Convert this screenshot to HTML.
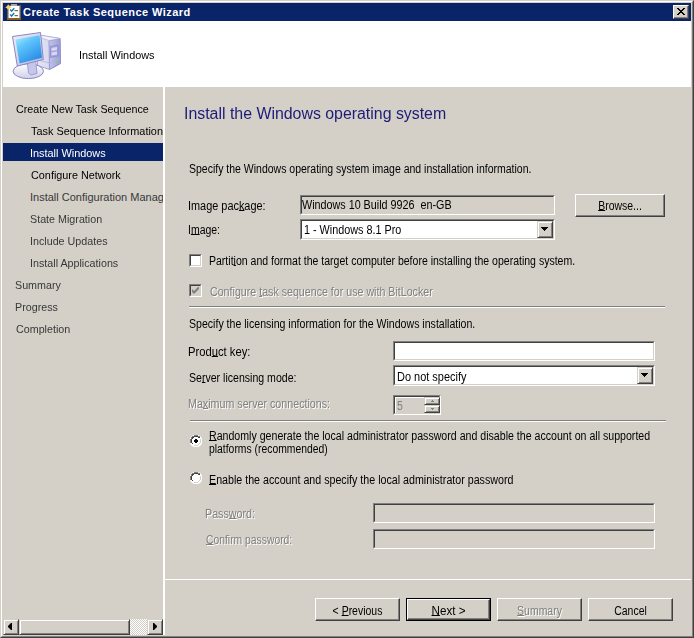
<!DOCTYPE html>
<html><head><meta charset="utf-8">
<style>
*{margin:0;padding:0;box-sizing:border-box}
html,body{width:694px;height:638px;overflow:hidden;background:#d4d0c8}
body{position:relative;font-family:"Liberation Sans",sans-serif;font-size:11px;color:#000}
.a{position:absolute}
.t{position:absolute;white-space:nowrap;line-height:13px}
.frame{left:0;top:0;width:694px;height:638px;border-top:1px solid #d4d0c8;border-left:1px solid #d4d0c8;border-right:1px solid #404040;border-bottom:1px solid #404040}
.frame2{left:1px;top:1px;width:692px;height:636px;border-top:1px solid #fff;border-left:1px solid #fff;border-right:1px solid #808080;border-bottom:1px solid #808080}
.title{left:3px;top:3px;width:688px;height:18px;background:#0a246a}
.ttext{left:23px;top:4px;color:#fff;font-weight:bold;font-size:11px;letter-spacing:0.45px;line-height:16px}
.close{left:673px;top:5px;width:16px;height:14px;background:#d4d0c8;border-top:1px solid #fff;border-left:1px solid #fff;border-right:1px solid #404040;border-bottom:1px solid #404040;box-shadow:inset -1px -1px 0 #808080}
.header{left:3px;top:21px;width:688px;height:66px;background:#fff}
.left{left:3px;top:87px;width:160px;height:548px;background:#d4d0c8}
.div{left:163px;top:87px;width:2px;height:548px;background:#fff}
.sel{left:3px;top:143px;width:160px;height:18px;background:#0a246a}
.nav{font-size:11px;transform:scaleX(0.975);transform-origin:0 0}
.dis{color:#383838}
.b{font-size:12px;line-height:14px;transform:scaleX(0.872);transform-origin:0 0}
.gray{color:#808080;text-shadow:1px 1px 0 #fff}
.sunk{position:absolute;border-top:1px solid #808080;border-left:1px solid #808080;border-right:1px solid #fff;border-bottom:1px solid #fff}
.sunk>.in{position:absolute;left:0;top:0;right:0;bottom:0;border-top:1px solid #404040;border-left:1px solid #404040;border-right:1px solid #d4d0c8;border-bottom:1px solid #d4d0c8}
.sbtn{position:absolute;width:16px;height:16px;background:#d4d0c8;border-top:1px solid #d4d0c8;border-left:1px solid #d4d0c8;border-right:1px solid #404040;border-bottom:1px solid #404040;box-shadow:inset 1px 1px 0 #fff,inset -1px -1px 0 #808080}
.btn{position:absolute;background:#d4d0c8;border-top:1px solid #fff;border-left:1px solid #fff;border-right:1px solid #404040;border-bottom:1px solid #404040;box-shadow:inset -1px -1px 0 #808080}
.bt{position:absolute;left:0;right:0;text-align:center;white-space:nowrap;font-size:12px;line-height:14px;transform:scaleX(0.872);transform-origin:50% 0}
.btnd{position:absolute;background:#d4d0c8;border:1px solid #000;}
.btnd>.in{position:absolute;left:0;top:0;right:0;bottom:0;border-top:1px solid #fff;border-left:1px solid #fff;border-right:1px solid #404040;border-bottom:1px solid #404040;box-shadow:inset -1px -1px 0 #808080}
.sep{position:absolute;height:2px;border-top:1px solid #808080;border-bottom:1px solid #fff}
.ddb{position:absolute;width:16px;height:16px;background:#d4d0c8;border-top:1px solid #d4d0c8;border-left:1px solid #d4d0c8;border-right:1px solid #404040;border-bottom:1px solid #404040;box-shadow:inset 1px 1px 0 #fff,inset -1px -1px 0 #808080}
.cb{position:absolute;width:13px;height:13px;border-top:1px solid #808080;border-left:1px solid #808080;border-right:1px solid #fff;border-bottom:1px solid #fff}
.cb>.in{position:absolute;left:0;top:0;right:0;bottom:0;border-top:1px solid #404040;border-left:1px solid #404040;border-right:1px solid #d4d0c8;border-bottom:1px solid #d4d0c8;background:#fff}
u{text-decoration:underline;text-decoration-thickness:1px;text-underline-offset:0px}
</style></head><body>
<div class="a frame"></div>
<div class="a frame2"></div>
<div class="a title"></div>
<svg class="a" style="left:3px;top:3px" width="20" height="18" viewBox="3 3 20 18">
  <rect x="7" y="5" width="14" height="15" fill="#6e5a48"/>
  <rect x="7" y="17.5" width="14" height="2.5" fill="#8a5e22"/>
  <rect x="8.5" y="6" width="11" height="12" fill="#fff"/>
  <rect x="11" y="4" width="6" height="2" fill="#a8a8a8"/>
  <path d="M10.2 9.6 L11.6 11.2 L14.2 8.2" stroke="#1f7aa6" stroke-width="1.5" fill="none"/>
  <path d="M10.2 14.4 L11.6 16 L14.2 13" stroke="#1f7aa6" stroke-width="1.5" fill="none"/>
  <rect x="14.5" y="10" width="3.5" height="1.2" fill="#6a6a6a"/>
  <rect x="14.5" y="15" width="3.5" height="1.2" fill="#6a6a6a"/>
  <path d="M8.3 4 L9.2 6.3 L11.5 7.3 L9.2 8.3 L8.3 10.5 L7.4 8.3 L5 7.3 L7.4 6.3 Z" fill="#f6b840"/>
  <circle cx="8.3" cy="7.3" r="1.8" fill="#fcd070"/>
</svg>
<div class="t ttext">Create Task Sequence Wizard</div>
<div class="a close"></div>
<svg class="a" style="left:677px;top:8px" width="8" height="7" viewBox="0 0 8 7" shape-rendering="crispEdges"><path d="M0 0h2v1h-2zM6 0h2v1h-2zM1 1h2v1h-2zM5 1h2v1h-2zM2 2h4v1h-4zM3 3h2v1h-2zM2 4h4v1h-4zM1 5h2v1h-2zM5 5h2v1h-2zM0 6h2v1h-2zM6 6h2v1h-2z" fill="#000"/></svg>

<div class="a header"></div>
<svg class="a" style="left:0;top:21px" width="70" height="66" viewBox="0 21 70 66">
  <defs>
    <linearGradient id="scr" x1="0" y1="0" x2="0.6" y2="1">
      <stop offset="0" stop-color="#b0f0ff"/><stop offset="0.4" stop-color="#5cc4fa"/><stop offset="1" stop-color="#2a8ce8"/>
    </linearGradient>
    <linearGradient id="side" x1="0" y1="0" x2="1" y2="0">
      <stop offset="0" stop-color="#e4e4f4"/><stop offset="1" stop-color="#cfcfec"/>
    </linearGradient>
    <linearGradient id="front" x1="0" y1="0" x2="1" y2="0">
      <stop offset="0" stop-color="#c4c4ec"/><stop offset="1" stop-color="#9c9cd8"/>
    </linearGradient>
    <linearGradient id="base" x1="0" y1="0" x2="0" y2="1">
      <stop offset="0" stop-color="#ffffff"/><stop offset="1" stop-color="#d0d0ea"/>
    </linearGradient>
    <linearGradient id="bez" x1="0" y1="0" x2="1" y2="1">
      <stop offset="0" stop-color="#f0f0fa"/><stop offset="1" stop-color="#b8b8e0"/>
    </linearGradient>
  </defs>
  <!-- tower -->
  <path d="M42 35.5 L60 38.5 L60.5 63.5 L49.5 69.5 L37.5 65.5 L38 37 Z" fill="url(#side)" stroke="#9a9ad0" stroke-width="0.9"/>
  <path d="M49 40.5 L60 38.5 L60.5 63.5 L49.5 69.5 Z" fill="url(#front)" stroke="#8c8cc8" stroke-width="0.8"/>
  <path d="M38 37 L42 35.5 L60 38.5 L49 40.5 Z" fill="#f4f4fc" stroke="#a8a8d8" stroke-width="0.6"/>
  <path d="M50.5 46.5 L58 45 L58 56 L50.5 57.5 Z" fill="#a4a4dc" stroke="#8080c0" stroke-width="0.6"/><path d="M51.5 48 L57 47 L57 50 L51.5 51 Z M51.5 52.5 L57 51.5 L57 54.5 L51.5 55.5 Z" fill="#d8d8f4"/>
  <path d="M38 60 L49.5 63 L60.3 59" fill="none" stroke="#b0b0dc" stroke-width="0.8"/>
  <rect x="56" y="61" width="2" height="2" fill="#7cd070"/>
  <!-- base -->
  <ellipse cx="28.3" cy="71.2" rx="15.2" ry="7.4" fill="url(#base)" stroke="#8a8ac4" stroke-width="1"/>
  <path d="M27 60 L35.5 59 L37 73.5 L31 75 L28.5 73 Z" fill="#c6c6ea" stroke="#9090c8" stroke-width="0.8"/>
  <!-- monitor -->
  <path d="M12.5 36.5 L40.5 32.5 L43.3 59.5 L17.3 66 Z" fill="url(#bez)" stroke="#8888c4" stroke-width="1"/>
  <path d="M15.5 39.5 L39.5 35.3 L42 57.8 L19.5 63.6 Z" fill="url(#scr)"/>
</svg>
<div class="t" style="left:79px;top:49px;transform:scaleX(0.988);transform-origin:0 0">Install Windows</div>

<div class="a left"></div>
<div class="a sel"></div>
<div class="a" style="left:3px;top:87px;width:160px;height:532px;overflow:hidden">
<div class="t nav" style="left:13px;top:16px">Create New Task Sequence</div>
<div class="t nav" style="left:28px;top:38px;transform:scaleX(0.99)">Task Sequence Information</div>
<div class="t nav" style="left:27px;top:60px;color:#fff;transform:scaleX(0.99)">Install Windows</div>
<div class="t nav" style="left:28px;top:82px;transform:scaleX(0.985)">Configure Network</div>
<div class="t nav dis" style="left:27px;top:104px;transform:scaleX(1.0)">Install Configuration Manager</div>
<div class="t nav dis" style="left:27px;top:126px">State Migration</div>
<div class="t nav dis" style="left:27px;top:148px">Include Updates</div>
<div class="t nav dis" style="left:27px;top:170px">Install Applications</div>
<div class="t nav dis" style="left:12px;top:192px">Summary</div>
<div class="t nav dis" style="left:12px;top:214px">Progress</div>
<div class="t nav dis" style="left:13px;top:236px">Completion</div>
</div>
<div class="a" style="left:3px;top:619px;width:160px;height:16px;background-image:repeating-conic-gradient(#fff 0 25%,#d4d0c8 0 50%);background-size:2px 2px"></div>
<div class="sbtn" style="left:3px;top:619px"></div>
<svg class="a" style="left:8px;top:623px" width="4" height="7" viewBox="0 0 4 7"><path d="M3 0h1v7h-1l-3-3v-1z" fill="#000"/></svg>
<div class="sbtn" style="left:19px;top:619px;width:111px"></div>
<div class="sbtn" style="left:147px;top:619px"></div>
<svg class="a" style="left:153px;top:623px" width="4" height="7" viewBox="0 0 4 7"><path d="M0 0h1l3 3v1l-3 3h-1z" fill="#000"/></svg>
<div class="a div"></div>

<!-- right panel -->
<div class="t" style="left:184px;top:105px;font-size:16px;line-height:18px;color:#1c1c78;transform:scaleX(0.9927);transform-origin:0 0">Install the Windows operating system</div>
<div class="t b" style="left:189px;top:162px;transform:scaleX(0.8746)">Specify the Windows operating system image and installation information.</div>

<div class="t b" style="left:188px;top:199px;transform:scaleX(0.9083)">Image pac<u>k</u>age:</div>
<div class="sunk" style="left:300px;top:195px;width:255px;height:20px"><div class="in"></div></div>
<div class="t b" style="left:302px;top:198px;transform:scaleX(0.897)">Windows 10 Build 9926&nbsp; en-GB</div>
<div class="btn" style="left:575px;top:194px;width:90px;height:23px"><div class="bt" style="top:4px"><u>B</u>rowse...</div></div>

<div class="t b" style="left:188px;top:223px">I<u>m</u>age:</div>
<div class="sunk" style="left:300px;top:219px;width:255px;height:21px;background:#fff"><div class="in"></div></div>
<div class="t b" style="left:304px;top:223px;transform:scaleX(0.90)">1 - Windows 8.1 Pro</div>
<div class="ddb" style="left:537px;top:221px;height:17px"></div>
<svg class="a" style="left:541px;top:227px" width="7" height="4" viewBox="0 0 7 4"><path d="M0 0h7v1h-1v1h-1v1h-1v1h-1v-1h-1v-1h-1v-1h-1z" fill="#000"/></svg>

<div class="cb" style="left:189px;top:254px"><div class="in"></div></div>
<div class="t b" style="left:209px;top:254px;transform:scaleX(0.8768)">Partit<u>i</u>on and format the target computer before installing the operating system.</div>
<div class="cb" style="left:189px;top:284px"><div class="in" style="background:#d4d0c8"></div></div>
<svg class="a" style="left:192px;top:287px" width="7" height="7" viewBox="0 0 7 7"><path d="M0 2v3l2 2l5-5v-3l-5 5z" fill="#808080"/></svg>
<div class="t b gray" style="left:210px;top:285px;transform:scaleX(0.888)">Configure <u>t</u>ask sequence for use with BitLocker</div>

<div class="sep" style="left:189px;top:306px;width:476px"></div>

<div class="t b" style="left:189px;top:317px;transform:scaleX(0.8813)">Specify the licensing information for the Windows installation.</div>
<div class="t b" style="left:188px;top:345px;transform:scaleX(0.9354)">Prod<u>u</u>ct key:</div>
<div class="sunk" style="left:393px;top:341px;width:262px;height:20px;background:#fff"><div class="in"></div></div>
<div class="t b" style="left:189px;top:371px;transform:scaleX(0.8804)">Se<u>r</u>ver licensing mode:</div>
<div class="sunk" style="left:393px;top:365px;width:262px;height:21px;background:#fff"><div class="in"></div></div>
<div class="t b" style="left:397px;top:370px;transform:scaleX(0.913)">Do not specify</div>
<div class="ddb" style="left:637px;top:367px;height:17px"></div>
<svg class="a" style="left:641px;top:373px" width="7" height="4" viewBox="0 0 7 4"><path d="M0 0h7v1h-1v1h-1v1h-1v1h-1v-1h-1v-1h-1v-1h-1z" fill="#000"/></svg>

<div class="t b gray" style="left:188px;top:397px;transform:scaleX(0.8912)">Ma<u>x</u>imum server connections:</div>
<div class="sunk" style="left:393px;top:395px;width:48px;height:20px"><div class="in"></div></div>
<div class="a" style="left:395px;top:397px;width:29px;height:1px;background:#fff"></div><div class="a" style="left:395px;top:397px;width:1px;height:16px;background:#fff"></div>
<div class="t b" style="left:397px;top:399px;color:#808080">5</div>
<div class="sbtn" style="left:424px;top:397px;width:16px;height:8px"></div>
<div class="sbtn" style="left:424px;top:405px;width:16px;height:8px"></div>
<svg class="a" style="left:431px;top:400px" width="3" height="2" viewBox="0 0 3 2" shape-rendering="crispEdges"><path d="M1 0h1v1h1v1h-3v-1h1z" fill="#808080"/></svg>
<svg class="a" style="left:431px;top:408px" width="3" height="2" viewBox="0 0 3 2" shape-rendering="crispEdges"><path d="M0 0h3v1h-1v1h-1v-1h-1z" fill="#808080"/></svg>

<div class="sep" style="left:190px;top:420px;width:476px"></div>

<svg class="a" style="left:190px;top:435px" width="12" height="12" viewBox="0 0 12 12">
  <path d="M4 0h4l2 1l1 1l1 2v4l-1 2l-1 1l-2 1h-4l-2-1l-1-1l-1-2v-4l1-2l1-1z" fill="#fff"/>
  <path d="M4 0h4v1h-4zM2 1h2v1h-2zM8 1h2v1h-2zM1 2h1v2h-1zM0 4h1v4h-1z" fill="#808080"/>
  <path d="M4 1h4v1h-4zM2 2h2v1h-2zM8 2h2v1h-2zM2 3h1v1h-1zM1 4h1v4h-1zM2 8h1v1h-1z" fill="#404040"/>
  <path d="M10 2h1v2h-1zM11 4h1v4h-1zM10 8h1v2h-1zM8 10h2v1h-2zM4 11h4v1h-4zM2 10h2v1h-2z" fill="#fff"/>
  <path d="M10 4h1v4h-1zM9 8h1v1h-1zM8 9h1v1h-1zM4 10h4v1h-4z" fill="#d4d0c8"/>
  <path d="M5 4h2v1h1v2h-1v1h-2v-1h-1v-2h1z" fill="#000"/>
</svg>
<div class="t b" style="left:209px;top:429px;transform:scaleX(0.8841)"><u>R</u>andomly generate the local administrator password and disable the account on all supported</div>
<div class="t b" style="left:209px;top:442px;transform:scaleX(0.8645)">platforms (recommended)</div>
<svg class="a" style="left:190px;top:472px" width="12" height="12" viewBox="0 0 12 12">
  <path d="M4 0h4l2 1l1 1l1 2v4l-1 2l-1 1l-2 1h-4l-2-1l-1-1l-1-2v-4l1-2l1-1z" fill="#fff"/>
  <path d="M4 0h4v1h-4zM2 1h2v1h-2zM8 1h2v1h-2zM1 2h1v2h-1zM0 4h1v4h-1z" fill="#808080"/>
  <path d="M4 1h4v1h-4zM2 2h2v1h-2zM8 2h2v1h-2zM2 3h1v1h-1zM1 4h1v4h-1zM2 8h1v1h-1z" fill="#404040"/>
  <path d="M10 2h1v2h-1zM11 4h1v4h-1zM10 8h1v2h-1zM8 10h2v1h-2zM4 11h4v1h-4zM2 10h2v1h-2z" fill="#fff"/>
  <path d="M10 4h1v4h-1zM9 8h1v1h-1zM8 9h1v1h-1zM4 10h4v1h-4z" fill="#d4d0c8"/>
</svg>
<div class="t b" style="left:209px;top:473px;transform:scaleX(0.8896)"><u>E</u>nable the account and specify the local administrator password</div>

<div class="t b gray" style="left:205px;top:507px;transform:scaleX(0.891)">Pass<u>w</u>ord:</div>
<div class="sunk" style="left:373px;top:503px;width:282px;height:20px"><div class="in"></div></div>
<div class="t b gray" style="left:206px;top:533px;transform:scaleX(0.8617)"><u>C</u>onfirm password:</div>
<div class="sunk" style="left:373px;top:529px;width:282px;height:20px"><div class="in"></div></div>

<div class="a" style="left:165px;top:579px;width:526px;height:1px;background:#fff"></div>

<div class="btn" style="left:315px;top:598px;width:85px;height:23px"><div class="bt" style="top:5px">&lt; <u>P</u>revious</div></div>
<div class="btnd" style="left:406px;top:598px;width:85px;height:23px"><div class="in"><div class="bt" style="top:4px;transform:scaleX(0.97)"><u>N</u>ext &gt;</div></div></div>
<div class="btn" style="left:497px;top:598px;width:85px;height:23px"><div class="bt gray" style="top:5px"><u>S</u>ummary</div></div>
<div class="btn" style="left:588px;top:598px;width:85px;height:23px"><div class="bt" style="top:5px">Cancel</div></div>

</body></html>
